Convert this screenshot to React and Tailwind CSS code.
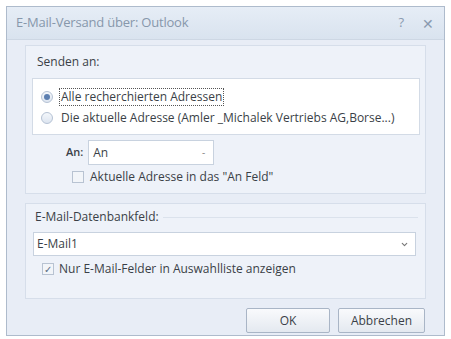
import { ChevronDown } from "lucide-react"

const font = { fontFamily: '"Open Sans", "Liberation Sans", sans-serif' }

function Radio({ checked }) {
    return (
        <span className="w-[12px] h-[12px] rounded-full border border-[#b5c2d4] bg-gradient-to-b from-[#f4f7fb] to-[#dde5f0] flex items-center justify-center shrink-0">
            {checked && <span className="w-[6px] h-[6px] rounded-full bg-[#5c7fb0]" />}
        </span>
    )
}

function Check({ checked }) {
    return (
        <span className="w-[12px] h-[12px] border border-[#b8c3d2] bg-[#f2f5f9] flex items-center justify-center shrink-0 text-[10px] leading-none text-[#5a6b82]">
            {checked && "✓"}
        </span>
    )
}

export default function App() {
    return (
        <div className="w-[451px] h-[339px] bg-white pt-[6px] px-[6px] text-[12px] text-[#3a3f47]" style={font}>
            <div className="h-[330px] border border-[#aebbcc] bg-[#e8edf6] flex flex-col">
                <div className="h-[33px] flex items-center justify-between pl-[9px] pr-[10px] bg-gradient-to-b from-[#e6edf6] to-[#d9e3ef] border-b border-[#cdd7e4]">
                    <span className="text-[13px] text-[#8797ab] tracking-[-0.2px]">E-Mail-Versand über: Outlook</span>
                    <div className="flex items-center gap-[18px] text-[#8a9ab0] text-[13px]">
                        <span>?</span>
                        <span className="text-[14px]">✕</span>
                    </div>
                </div>

                <div className="px-[18px] pt-[5px] flex flex-col">
                    <div className="border border-[#d6deea] bg-[#eef2f9] pt-[6px] pb-[6px] pl-[6px] pr-[5px]">
                        <div className="pl-[5px] h-[20px] flex items-center">Senden an:</div>
                        <div className="mt-[6px] bg-white border border-[#d3dbe6] h-[57px] flex flex-col justify-center gap-[4px] pl-[8px]">
                            <div className="flex items-center gap-[6px]">
                                <Radio checked />
                                <span className="border border-dotted border-[#555] px-[1px] leading-[16px]">Alle recherchierten Adressen</span>
                            </div>
                            <div className="flex items-center gap-[6px]">
                                <Radio />
                                <span className="leading-[16px] px-[2px]">Die aktuelle Adresse (Amler _Michalek Vertriebs AG,Borse...)</span>
                            </div>
                        </div>
                        <div className="flex items-center mt-[5px] pl-[34px] gap-[5px]">
                            <span className="font-semibold text-[11px]">An:</span>
                            <div className="w-[126px] h-[25px] bg-white border border-[#c8d2df] flex items-center justify-between pl-[4px] pr-[8px]">
                                <span>An</span>
                                <span className="text-[#888] text-[10px]">-</span>
                            </div>
                        </div>
                        <div className="flex items-center gap-[6px] pl-[40px] mt-[2px] h-[20px]">
                            <Check />
                            <span>Aktuelle Adresse in das "An Feld"</span>
                        </div>
                    </div>

                    <div className="mt-[9px] border border-[#d6deea] bg-[#eef2f9] pt-[3px] pb-[10px] px-[7px] h-[96px]">
                        <div className="flex items-center gap-[4px] h-[20px] pl-[2px]">
                            <span className="shrink-0">E-Mail-Datenbankfeld:</span>
                            <span className="flex-1 h-px bg-[#dbe2ec]" />
                        </div>
                        <div className="mt-[5px] h-[24px] w-[383px] bg-white border border-[#c8d2df] flex items-center justify-between pl-[3px] pr-[6px]">
                            <span>E-Mail1</span>
                            <ChevronDown className="w-[9px] h-[9px] text-[#777]" strokeWidth={3} />
                        </div>
                        <div className="flex items-center gap-[5px] pl-[9px] mt-[4px] h-[18px]">
                            <Check checked />
                            <span>Nur E-Mail-Felder in Auswahlliste anzeigen</span>
                        </div>
                    </div>

                    <div className="flex justify-end gap-[8px] mt-[9px] pr-[1px]">
                        <button className="w-[84px] h-[25px] border border-[#a9b5c6] rounded-[2px] bg-gradient-to-b from-[#f9fafc] to-[#e4e9f0] text-[12px]">OK</button>
                        <button className="w-[87px] h-[25px] border border-[#a9b5c6] rounded-[2px] bg-gradient-to-b from-[#f9fafc] to-[#e4e9f0] text-[12px]">Abbrechen</button>
                    </div>
                </div>
            </div>
        </div>
    )
}
